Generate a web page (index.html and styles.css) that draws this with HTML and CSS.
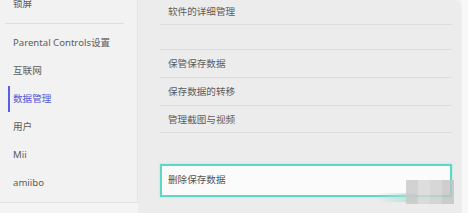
FILE: index.html
```html
<!DOCTYPE html>
<html lang="zh">

<head>
  <meta charset="UTF-8" />
  <meta name="viewport" content="width=device-width, initial-scale=1.0" />
  <title>数据管理</title>
  <link rel="stylesheet" href="styles.css">
</head>

<body>
  <div class="screen">
    <div class="sidebar">
      <div class="nav-item first">锁屏</div>
      <hr class="nav-sep">
      <div class="nav-item">Parental Controls设置</div>
      <div class="nav-item">互联网</div>
      <div class="nav-item active">数据管理</div>
      <div class="nav-item">用户</div>
      <div class="nav-item">Mii</div>
      <div class="nav-item">amiibo</div>
    </div>
    <div class="main">
      <div class="row first">软件的详细管理</div>
      <div class="row blank"></div>
      <div class="row">保管保存数据</div>
      <div class="row">保存数据的转移</div>
      <div class="row short">管理截图与视频</div>
      <div class="row selected">删除保存数据</div>
      <div class="swoosh"></div>
      <div class="mark"><span></span><span></span><span></span><span></span></div>
    </div>
    <div class="edge"></div>
  </div>
</body>

</html>
```
FILE: styles.css
```css
*,
::before,
::after {
  box-sizing: border-box;
}

html {
  font-family: 'Noto Sans', 'Noto Sans CJK SC', sans-serif;
}

body {
  margin: 0;
  background: #f4f4f4;
}

.screen {
  display: flex;
  width: 468px;
  height: 213px;
  overflow: hidden;
  font-size: 9.6px;
  color: #5c5c5c;
}

/* left menu */
.sidebar {
  width: 138px;
  height: 203px;
  background: #f2f2f2;
  border-right: 1px solid #e6e6e6;
  border-bottom: 1px solid #e2e2e2;
  padding-left: 13px;
}

.nav-item {
  height: 28px;
  line-height: 28px;
  position: relative;
}

.nav-item.first {
  margin-top: -10px;
}

.nav-sep {
  border: 0;
  border-top: 1px solid #dedede;
  margin: 5px 13px 5px -8px;
}

.nav-item.active {
  color: #5256d6;
}

.nav-item.active::before {
  content: "";
  position: absolute;
  left: -5px;
  top: 1px;
  bottom: 1px;
  width: 2px;
  background: #5a5ee0;
}

/* right list */
.main {
  flex: 1;
  background: #ececec;
  border-top-right-radius: 8px;
  padding: 0 10px 0 22px;
  position: relative;
}

.row {
  height: 28px;
  line-height: 28px;
  padding-left: 8px;
  border-bottom: 1px solid #dcdcdc;
}

.row.first {
  height: 27px;
  margin-top: -2px;
}

.row.blank {
  height: 25px;
}

.row.short {
  height: 27px;
}

.row.selected {
  margin-top: 31px;
  height: 33px;
  line-height: 28px;
  background: #fbfbfb;
  border: 2px solid #5cd8c5;
  box-shadow: 0 0 2px #9fe8dc;
  padding-left: 6px;
  color: #555;
}

/* faint watermark over the corner */
.swoosh {
  position: absolute;
  left: 238px;
  top: 193px;
  width: 40px;
  height: 9px;
  border-radius: 0 0 0 20px;
  background: linear-gradient(90deg, rgba(170, 225, 215, 0), rgba(170, 225, 215, 0.9));
}

.mark {
  position: absolute;
  left: 268px;
  top: 180px;
  display: flex;
  opacity: 0.8;
}

.mark span {
  width: 12px;
  height: 24px;
  background: #c9c9c9;
}

.mark span:nth-child(2) {
  background: #d6d6d6;
}

.mark span:nth-child(3) {
  background: #cfcfcf;
}

.mark span:nth-child(4) {
  background: #c4c4c4;
}

.edge {
  width: 6px;
  background: #f7f7f7;
}
```
